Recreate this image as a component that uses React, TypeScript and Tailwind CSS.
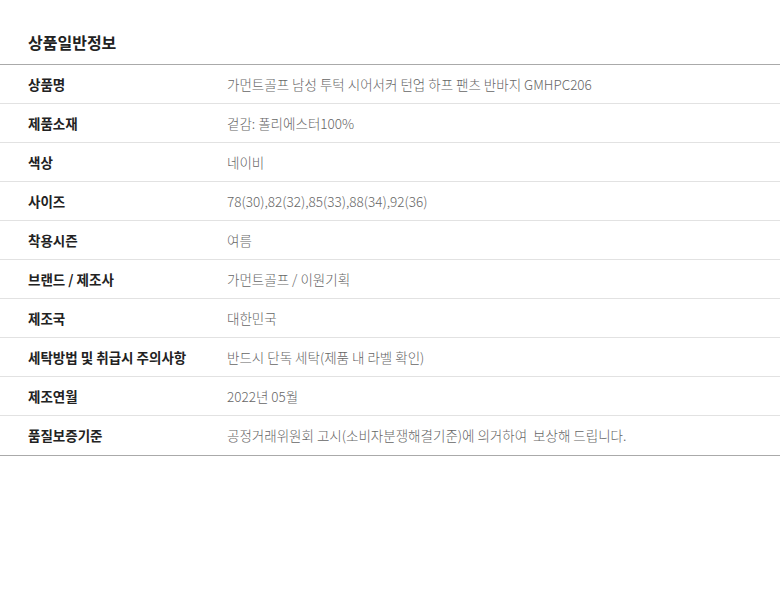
const rows: [string, string][] = [
  ["상품명", "가먼트골프 남성 투턱 시어서커 턴업 하프 팬츠 반바지 GMHPC206"],
  ["제품소재", "겉감: 폴리에스터100%"],
  ["색상", "네이비"],
  ["사이즈", "78(30),82(32),85(33),88(34),92(36)"],
  ["착용시즌", "여름"],
  ["브랜드 / 제조사", "가먼트골프 / 이원기획"],
  ["제조국", "대한민국"],
  ["세탁방법 및 취급시 주의사항", "반드시 단독 세탁(제품 내 라벨 확인)"],
  ["제조연월", "2022년 05월"],
  ["품질보증기준", "공정거래위원회 고시(소비자분쟁해결기준)에 의거하여  보상해 드립니다."],
];

export default function App() {
  return (
    <div
      className="w-[780px] h-[592px] bg-white"
      style={{ fontFamily: '"Noto Sans CJK KR", "Noto Sans", sans-serif' }}
    >
      <div className="pt-[31px] pb-[11px] pl-[28px] text-[16px] font-bold text-[#222] leading-[22px]">
        상품일반정보
      </div>
      <div className="border-t border-b border-[#aaaaaa] pb-px">
        {rows.map(([k, v], i) => (
          <div
            key={k}
            className={`flex h-[38px] box-content items-center text-[13.5px] ${i > 0 ? "border-t border-[#e2e2e2]" : ""}`}
          >
            <div className="w-[227px] shrink-0 pl-[28px] font-bold text-[#222] whitespace-pre">{k}</div>
            <div className="text-[#666] font-light whitespace-pre">{v}</div>
          </div>
        ))}
      </div>
    </div>
  );
}
